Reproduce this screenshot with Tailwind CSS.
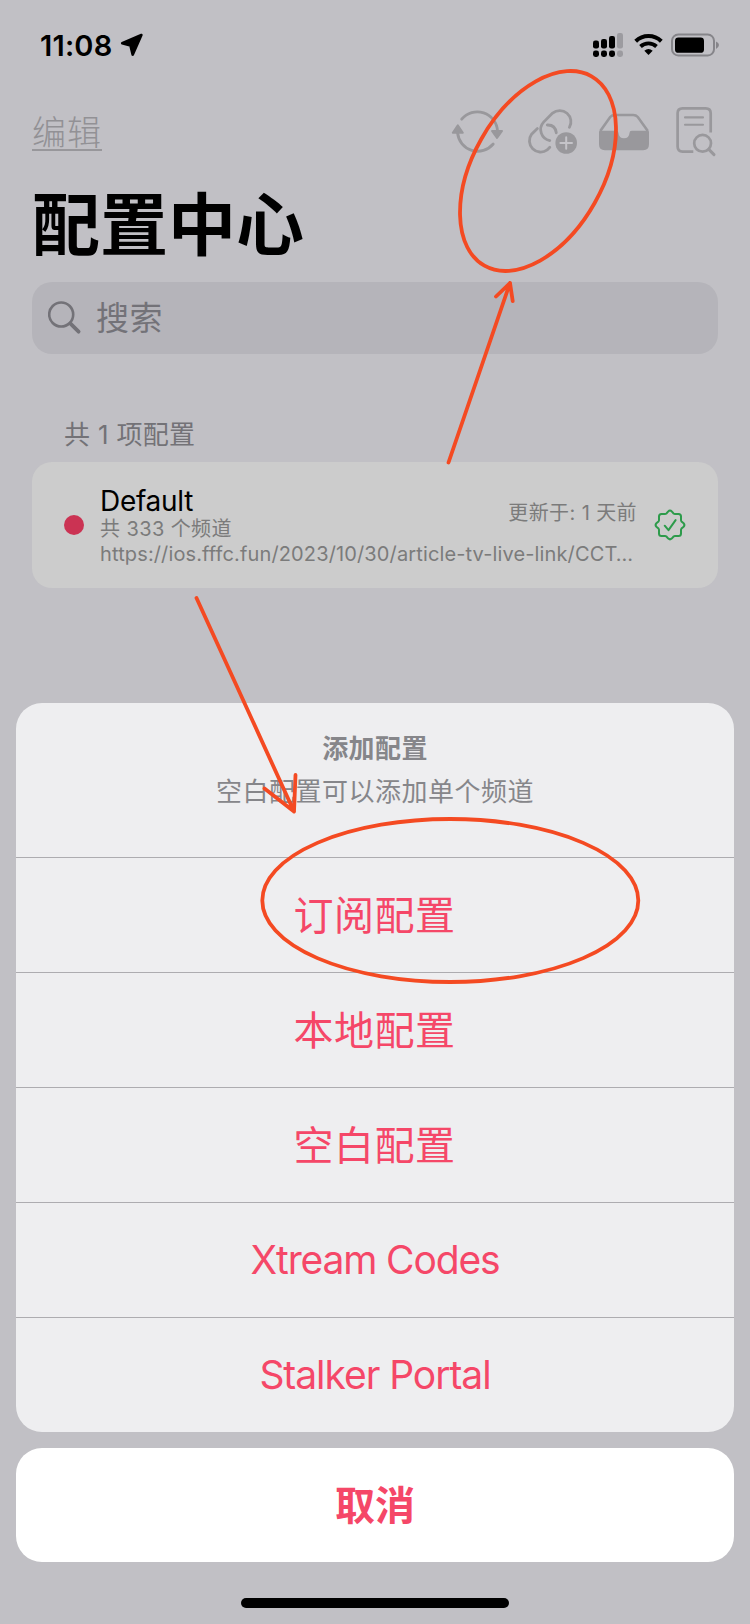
<!DOCTYPE html>
<html lang="zh-CN">
<head>
<meta charset="utf-8">
<title>配置中心</title>
<script src="https://cdn.jsdelivr.net/npm/@tailwindcss/browser@4"></script>
</head>
<body class="bg-[#c1c0c5] font-['Inter','Noto_Sans_CJK_SC',sans-serif]">
<div class="relative flex h-[1624px] w-[750px] flex-col overflow-hidden bg-[#c1c0c5]">
  <!-- Status bar -->
  <header class="flex h-[90px] items-center justify-between pl-10 pr-[30px]">
    <div class="flex items-center gap-2">
      <span class="text-[29px] font-semibold leading-none tracking-[0.2px] text-black">11:08</span>
      <svg class="h-6 w-6" viewBox="0 0 24 24"><path d="M21.4 2 2.2 10.3 10.5 12.6 12.7 21.6Z" fill="#000" stroke="#000" stroke-width="2.6" stroke-linejoin="round"/></svg>
    </div>
    <div class="flex items-center">
      <svg class="h-6 w-[32px]" viewBox="0 0 32 24">
        <g fill="#000"><rect x="1" y="7.5" width="6" height="8" rx="2.2"/><rect x="9" y="6" width="6" height="9.5" rx="2.2"/><rect x="17" y="3" width="6" height="12.5" rx="2.2"/><rect x="1" y="17.5" width="6" height="6.5" rx="2.4"/><rect x="9" y="17.5" width="6" height="6.5" rx="2.4"/><rect x="17" y="17.5" width="6" height="6.5" rx="2.4"/></g>
        <g fill="#9c9ba0"><rect x="25" y="0" width="6" height="15.5" rx="2.2"/><rect x="25" y="17.5" width="6" height="6.5" rx="2.4"/></g>
      </svg>
      <svg class="ml-[10px] h-[22px] w-[29px]" viewBox="0 0 29 22" fill="none" stroke="#000">
        <path d="M1.7 7.3A18.4 18.4 0 0 1 27.3 7.3" stroke-width="4"/>
        <path d="M6.5 12.5A11.6 11.6 0 0 1 22.5 12.5" stroke-width="3.8"/>
        <path d="M10.3 16.7Q14.5 13.3 18.7 16.7L14.5 20.9Z" fill="#000" stroke="none"/>
      </svg>
      <svg class="ml-2 h-6 w-[49px]" viewBox="0 0 49 24">
        <rect x="1" y="1.5" width="42" height="21" rx="6.3" fill="none" stroke="#86858a" stroke-width="2"/>
        <rect x="4" y="4.5" width="29" height="15.3" rx="3.4" fill="#000"/>
        <path d="M45 8.5Q48 9.9 48 12T45 15.9Z" fill="#86858a"/>
      </svg>
    </div>
  </header>

  <!-- Navigation bar -->
  <nav class="flex h-[88px] items-center justify-between pl-8 pr-[32px]">
    <a class="flex h-[34px] items-center border-b-2 border-[#98979b] text-[34px] font-light leading-[34px] tracking-[1px] text-[#929195]">编辑</a>
    <div class="flex items-center text-[#99989c]">
      <svg class="h-[60px] w-[54px]" viewBox="0 0 54 60" fill="none" stroke="currentColor" stroke-width="2.8" stroke-linecap="round">
        <path d="M11.7 15.2A20.2 20.2 0 0 1 47.5 27"/>
        <path d="M43.2 40A20.2 20.2 0 0 1 7.6 29"/>
        <path d="M7.8 21.3 12.8 28.7H2.8ZM47 34 42 27H52Z" fill="currentColor" stroke-width="2" stroke-linejoin="round"/>
      </svg>
      <svg class="ml-[23px] h-[60px] w-[50px]" viewBox="0 0 50 60" fill="none" stroke="currentColor" stroke-width="2.8" stroke-linecap="round">
        <path d="M42.4 23.4A11.2 11.2 0 0 0 25.6 9.1L16.6 18.1A11.2 11.2 0 0 0 22.8 36.6"/>
        <path d="M10.4 24.6 4.6 30.2A11.2 11.2 0 0 0 20.2 45.9L22.8 43.2"/>
        <path d="M20.3 21Q28.2 20.6 29.3 28.8"/>
        <circle cx="39.2" cy="39" r="10.8" fill="currentColor" stroke="none"/>
        <path d="M39.2 33.2V44.8M33.4 39H45" stroke="#c5c4c9" stroke-width="2"/>
      </svg>
      <svg class="ml-[22px] h-[60px] w-[50px]" viewBox="0 0 50 60">
        <path d="M1.3 27 11.2 13Q13 11 15.8 11H34.2Q37 11 38.8 13L48.8 27" fill="none" stroke="currentColor" stroke-width="2.6"/>
        <path d="M0 28Q0 26.7 1.2 26.7H17.2Q19.5 26.7 19.5 29Q19.9 34.3 25 34.3T30.5 29Q30.5 26.7 32.8 26.7H48.8Q50 26.7 50 28V40.3Q50 46.2 44.2 46.2H5.8Q0 46.2 0 40.3Z" fill="currentColor"/>
      </svg>
      <svg class="ml-[27px] h-[60px] w-[42px]" viewBox="0 0 42 60" fill="none" stroke="currentColor" stroke-width="2.7" stroke-linecap="round">
        <path d="M17.3 47.6H6.6Q1.6 47.6 1.6 42.6V9.3Q1.6 4.3 6.6 4.3H29.7Q34.7 4.3 34.7 9.3V28.5" stroke-linecap="butt"/>
        <path d="M9 13.4H27M9 20.8H27" stroke-width="2.1"/>
        <circle cx="26.6" cy="39.3" r="8.4"/>
        <path d="M32.8 45.4 38 50.6" stroke-width="3"/>
      </svg>
    </div>
  </nav>

  <!-- Large title and search field -->
  <h1 class="ml-8 flex h-[104px] items-center pb-[11px] text-[68px] font-bold leading-none text-black"><span>配置中心</span></h1>
  <div class="mx-8 flex h-[72px] shrink-0 items-center gap-[14px] rounded-[20px] bg-[#b5b4ba] pl-4 text-[#737278]">
    <svg class="h-[34px] w-[34px]" viewBox="0 0 34 34" fill="none" stroke="currentColor" stroke-linecap="round"><circle cx="13.2" cy="13.5" r="12" stroke-width="2.6"/><path d="M22.5 22.7 30.6 30.7" stroke-width="3.8"/></svg>
    <span class="pt-px text-[33px] leading-none tracking-[0.6px]">搜索</span>
  </div>

  <!-- Configuration list -->
  <section class="mx-8 mt-[54px]">
    <h2 class="flex h-[54px] items-center pb-[2px] pl-8 text-[26px] font-normal tracking-[0.3px] text-[#737277]">共 1 项配置</h2>
    <div class="flex h-[126px] items-center rounded-[20px] bg-[#cccccc] px-8">
      <span class="h-5 w-5 shrink-0 rounded-full bg-[#cb3353]"></span>
      <div class="ml-4 w-[537px] shrink-0 pt-[2px]">
        <div class="flex items-end">
          <div class="flex flex-1 flex-col">
            <span class="text-[28px] leading-[32px] tracking-[-0.3px] text-black">Default</span>
            <span class="text-[20px] leading-[24px] tracking-[0.4px] text-[#7b7b7b]">共 333 个频道</span>
          </div>
          <span class="mb-[16px] text-[20px] leading-6 tracking-[0.4px] text-[#7b7b7b]">更新于: 1 天前</span>
        </div>
        <p class="whitespace-nowrap text-[20px] leading-[26px] tracking-[0.13px] text-[#7b7b7b]">https://ios.fffc.fun/2023/10/30/article-tv-live-link/CCT…</p>
      </div>
      <svg class="ml-[17px] h-8 w-8 shrink-0" viewBox="0 0 32 32" fill="none" stroke="#2d9b4b" stroke-width="2" stroke-linecap="round" stroke-linejoin="round">
        <path d="M16 1.6Q17 1.6 17.7 2.4L19.6 4.5Q20.2 5 21 5H24.5Q27 5 27 7.5V11Q27 11.8 27.5 12.4L29.6 14.3Q31.2 16 29.6 17.7L27.5 19.6Q27 20.2 27 21V24.5Q27 27 24.5 27H21Q20.2 27 19.6 27.5L17.7 29.6Q16 31.2 14.3 29.6L12.4 27.5Q11.8 27 11 27H7.5Q5 27 5 24.5V21Q5 20.2 4.5 19.6L2.4 17.7Q.8 16 2.4 14.3L4.5 12.4Q5 11.8 5 11V7.5Q5 5 7.5 5H11Q11.8 5 12.4 4.5L14.3 2.4Q15 1.6 16 1.6Z"/>
        <path d="M10.7 16.7 14.5 21.2 21.6 11.1"/>
      </svg>
    </div>
  </section>

  <!-- Action sheet -->
  <div class="mx-4 mt-[115px] flex h-[729px] shrink-0 flex-col overflow-hidden rounded-[26px] bg-[#eeeef0] text-center text-[40px] text-[#f54768]">
    <div class="h-[154px] pt-[27px] text-[26px] text-[#86868a]">
      <p class="font-bold leading-[38px] tracking-[0.4px]">添加配置</p>
      <p class="mt-[5px] font-normal leading-[38px] tracking-[0.5px]">空白配置可以添加单个频道</p>
    </div>
    <button class="h-[115px] border-t border-[#adacb0] pr-px pt-px tracking-[0.5px]">订阅配置</button>
    <button class="h-[115px] border-t border-[#adacb0] pr-px pt-px tracking-[0.5px]">本地配置</button>
    <button class="h-[115px] border-t border-[#adacb0] pr-px pt-px tracking-[0.5px]">空白配置</button>
    <button class="h-[115px] border-t border-[#adacb0] pt-px text-[39px] tracking-[-1.15px]">Xtream Codes</button>
    <button class="h-[115px] border-t border-[#adacb0] pt-px text-[39px] tracking-[-1.05px]">Stalker Portal</button>
  </div>
  <button class="mx-4 mt-4 h-[114px] shrink-0 rounded-[26px] bg-white pt-[2px] text-[40px] font-bold text-[#f54768]">取消</button>
  <div class="mx-auto mt-9 h-[10px] w-[268px] shrink-0 rounded-full bg-black"></div>

  <!-- Hand-drawn annotations over the screen -->
  <svg class="pointer-events-none absolute inset-0 h-[1624px] w-[750px]" viewBox="0 0 750 1624" fill="none" stroke="#f44a22" stroke-width="3.8" stroke-linecap="round" stroke-linejoin="round">
    <ellipse cx="538" cy="171" rx="108.8" ry="65.1" transform="rotate(-60.5 538 171)"/>
    <path d="M448.5 462.5 510 283M496 296.5 510 283 512.7 301"/>
    <ellipse cx="450.3" cy="900.5" rx="188" ry="81.5"/>
    <path d="M196.5 598 294 811.5M264.5 788.5 294 811.5 295.5 775"/>
  </svg>
</div>
</body>
</html>
